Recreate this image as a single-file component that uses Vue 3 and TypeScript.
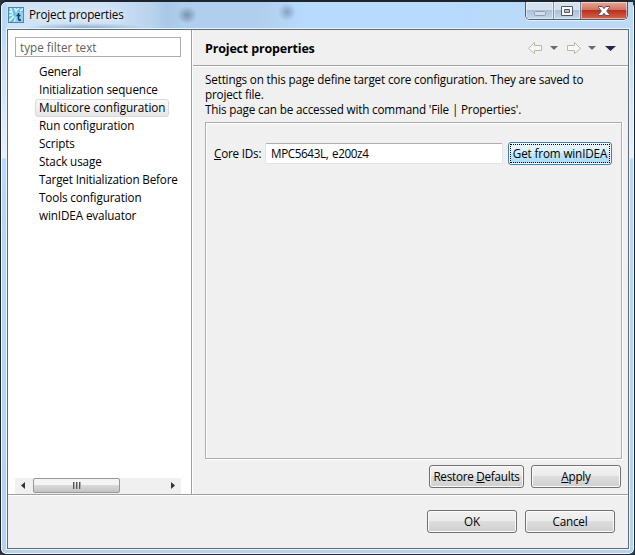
<script setup lang="ts">
import { ref } from 'vue'

const items: string[] = [
  'General',
  'Initialization sequence',
  'Multicore configuration',
  'Run configuration',
  'Scripts',
  'Stack usage',
  'Target Initialization Before',
  'Tools configuration',
  'winIDEA evaluator',
]
const selected = ref('Multicore configuration')
const filter = ref('')
const coreIds = ref('MPC5643L, e200z4')
</script>

<template>
  <div class="window">
    <header class="titlebar">
      <svg class="app-icon" viewBox="0 0 16 16" width="16" height="16">
        <rect width="16" height="16" fill="#62bbe4" />
        <path d="M0 4.500 4 5.500 2.500 1M6 0 8 4 11.500 0M0 9 5 7.500M1 14 6 9M6 16 8 10M12 4 16 1" stroke="#d8f2fc" stroke-width="1.800" fill="none" />
        <rect x="7.500" y="5" width="8.500" height="11" fill="#8fd0ee" />
        <path d="M10.500 6v6q0 1.500 2.500 1M8.500 8.500h4" stroke="#123d62" stroke-width="1.600" fill="none" />
        <rect x=".5" y=".5" width="15" height="15" fill="none" stroke="#4a88ad" />
      </svg>
      <span class="title">Project properties</span>
      <div class="controls">
        <button class="ctl min" aria-label="Minimize">
          <svg width="14" height="14" viewBox="0 0 14 14"><rect x="1.500" y="7.500" width="11" height="4" rx="1" fill="#d4dfeb" stroke="#8e9eb1" /></svg>
        </button>
        <button class="ctl max" aria-label="Maximize">
          <svg width="14" height="14" viewBox="0 0 14 14"><path d="M1.500 2.500h11v9h-11zM4.500 5.500v3h5v-3z" fill="#fff" stroke="#535666" fill-rule="evenodd" /></svg>
        </button>
        <button class="ctl close" aria-label="Close">
          <svg width="14" height="14" viewBox="0 0 14 14"><path d="M1.500 2.500H5.200L7 4.700l1.800-2.200h3.700v1L9.700 7l2.800 3.500v1H8.800L7 9.300l-1.800 2.200H1.500v-1L4.300 7 1.500 3.500z" fill="#fff" stroke="#5a4c5c" /></svg>
        </button>
      </div>
    </header>
    <main class="client">
      <div class="upper">
        <aside class="side">
          <input v-model="filter" class="filter" placeholder="type filter text" />
          <ul class="tree">
            <li v-for="item in items" :key="item" @click="selected = item">
              <span :class="{ on: item === selected }">{{ item }}</span>
            </li>
          </ul>
          <div class="scroll">
            <svg width="17" height="16" viewBox="0 0 17 16"><path d="M10 4v7L6 7.500z" fill="#333" /></svg>
            <div class="thumb"><i /><i /><i /></div>
            <svg width="17" height="16" viewBox="0 0 17 16"><path d="M7 4v7l4-3.500z" fill="#333" /></svg>
          </div>
        </aside>
        <section class="page">
          <div class="head">
            <h1>Project properties</h1>
            <svg class="nav" width="92" height="16" viewBox="0 0 92 16">
              <path d="M.5 7.500 6.500 1.500v3h7v5h-7v3z" fill="#f8f8f2" stroke="#b8b8ac" />
              <path d="M22 5h8l-4 4z" fill="#6c6c70" />
              <path d="M52.500 7.500 46.500 1.500v3h-7v5h7v3z" fill="#f8f8f2" stroke="#b8b8ac" />
              <path d="M60 5h8l-4 4z" fill="#6c6c70" />
              <path d="M77 5h11l-5.500 5z" fill="#29234f" />
            </svg>
          </div>
          <div class="body">
            <p class="desc"><span>Settings on this page define target core configuration. They are saved to</span><br />project file.<br /><span>This page can be accessed with command 'File | Properties'.</span></p>
            <div class="group">
              <div class="field">
                <label><u>C</u>ore IDs:</label>
                <input v-model="coreIds" />
                <button class="btn focus"><span>Get from winIDEA</span></button>
              </div>
            </div>
            <div class="actions">
              <button class="btn restore"><span>Restore <u>D</u>efaults</span></button>
              <button class="btn"><span><u>A</u>pply</span></button>
            </div>
          </div>
        </section>
      </div>
      <footer class="foot">
        <button class="btn"><span>OK</span></button>
        <button class="btn"><span>Cancel</span></button>
      </footer>
    </main>
  </div>
</template>

<style>
body { background: #28343f; }
</style>

<style scoped>
* { box-sizing: border-box; }
.window {
  width: 635px; height: 555px; padding: 0 5px 5px 6px;
  border: 1px solid #1d242d; border-top-width: 2px; border-radius: 7px 7px 6px 6px;
  box-shadow: inset 0 0 0 1px #f3faff;
  background: linear-gradient(#b9d7f5 0, #b8dafb 30px, #c8e0f8 60px, #e6f1fc 156px, #b7d8fa 157px, #b5d2ef 100%);
  font: 11.7px/15px "Open Sans", "Noto Sans", sans-serif; letter-spacing: -.2px; color: #000;
}
button, input { font: inherit; letter-spacing: inherit; color: inherit; margin: 0; padding: 0; }
.titlebar {
  height: 27px; display: flex; padding-left: 1px; margin: 0 -4px 0 0;
  background:
    radial-gradient(ellipse 10px 9px at 180px 13px, #7c93ae 0, #8198b300 100%),
    radial-gradient(ellipse 9px 9px at 280px 10px, #86a3c5 0, #8aa8cb00 100%),
    radial-gradient(ellipse 60px 5px at 78px 26px, #8faac7 0, #8faac700 100%),
    linear-gradient(90deg, #cfe2f6 0, #cfe2f6 100px, #b8d3ee 145px, #a8c8e8 160px, #b0cfee 175px, #b0cfef 250px, #b8dafb 300px, #b8dafb 440px, #bcd9f5 100%);
}
.app-icon { margin-top: 5px; }
.title { margin: 5px 0 0 5px; letter-spacing: -.18px; text-shadow: 0 0 6px #fff, 0 0 10px #e8f3ff; }
.controls {
  margin-left: auto; margin-right: 5px; height: 18px; width: 103px; display: flex;
  border: 1px solid #4e5c70; border-top: 0; border-radius: 0 0 5px 5px; box-shadow: 0 1px #e5f1fd; overflow: hidden;
}
.ctl { border: 0; display: flex; justify-content: center; align-items: center; box-shadow: inset 0 0 0 1px #ffffff80; }
.min { width: 28px; background: linear-gradient(#d4e1ef 0 45%, #a9bed5 46%, #c5d9ed); border-right: 1px solid #7f92aa; }
.max { width: 27px; background: linear-gradient(#d4e1ef 0 45%, #a9bed5 46%, #c5d9ed); border-right: 1px solid #69778c; }
.close { flex: 1; background: linear-gradient(#e6a697 0, #d27461 45%, #b52e18 46%, #d8644a); }
.client {
  height: 520px; border: 1px solid #5d6a78; background: #f0f0f0;
  box-shadow: 0 0 0 1px #e9f5ff; display: flex; flex-direction: column;
}
.upper { height: 465px; display: flex; border-bottom: 1px solid #a0a0a0; }
.side { width: 184px; background: #fff; border-right: 1px solid #a0a0a0; padding: 7px 10px 0 7px; display: flex; flex-direction: column; }
.filter { width: 166px; height: 20px; border: 1px solid #abadb3; padding: 0 4px 1px; background: #fff; outline: 0; letter-spacing: .02px; }
.filter::placeholder { color: #606060; opacity: 1; }
.tree { list-style: none; margin: 5px 0 0; padding: 0; width: 166px; overflow: hidden; letter-spacing: -.12px; }
.tree li { height: 18px; line-height: 18px; padding-left: 20px; white-space: nowrap; }
.tree li:nth-child(7) { letter-spacing: -.17px; }
.tree span { display: inline-block; height: 18px; line-height: 15px; border: 1px solid transparent; padding: 0 3px; }
.tree .on { letter-spacing: -.05px; border-color: #d9d9d9; border-radius: 3px; background: linear-gradient(#fafafa, #e6e6e6); }
.scroll { margin-top: auto; height: 16px; width: 166px; background: #f0f0f0; display: flex; }
.thumb { width: 87px; height: 15px; margin: 0 auto 1px 1px; border: 1px solid #979797; border-radius: 2px; background: linear-gradient(#f4f4f4 0 45%, #d9d9db 50%, #c3c3c6); display: flex; justify-content: center; gap: 1px; padding-top: 3px; }
.thumb i { width: 2px; height: 7px; background: linear-gradient(90deg, #555 50%, #aaa 50%); }
.page { flex: 1; display: flex; flex-direction: column; border-left: 1px solid #fff; }
.head { height: 36px; border-bottom: 1px solid #a0a0a0; box-shadow: 0 1px #fff; display: flex; align-items: center; padding: 2px 8px 0 12px; }
h1 { font: 700 12.5px/18px "Open Sans", sans-serif; letter-spacing: -.17px; margin: 0 auto 0 0; }
.body { padding: 6px 6px 0 12px; }
.desc { margin: 0; height: 50px; white-space: nowrap; letter-spacing: -.17px; }
.group { width: 417px; height: 337px; border: 1px solid #abadb3; box-shadow: inset 1px 1px #fff, 1px 1px #fff; padding: 19px 9px 19px 8px; }
.field { display: flex; align-items: center; }
.field label { width: 51px; white-space: nowrap; }
.field input { width: 238px; height: 21px; border: 1px solid #e2e3ea; border-top-color: #abadb3; padding: 0 5px 1px; background: #fff; border-radius: 2px; outline: 0; letter-spacing: -.38px; word-spacing: 1px; }
.btn { width: 90px; height: 23px; border: 1px solid #707070; border-radius: 3px; background: linear-gradient(#f2f2f2 0, #ebebeb 48%, #dddddd 50%, #cfcfcf); box-shadow: inset 0 0 0 1px #fcfcfc; white-space: nowrap; }
.focus { width: 104px; margin-left: 5px; border-color: #3c7fb1; padding: 1px; letter-spacing: -.14px; background: linear-gradient(#eaf6fd 0, #d9f0fc 48%, #bee6fd 50%, #a7d9f5); }
.focus span { display: flex; height: 19px; align-items: center; justify-content: center; outline: 1px dotted #000; outline-offset: -1px; }
.actions { display: flex; gap: 7px; margin-top: 6px; padding-left: 224px; }
.restore { width: 95px; letter-spacing: -.25px; }
.foot { flex: 1; border-top: 1px solid #fff; display: flex; gap: 8px; padding: 14px 0 0 419px; }
</style>
